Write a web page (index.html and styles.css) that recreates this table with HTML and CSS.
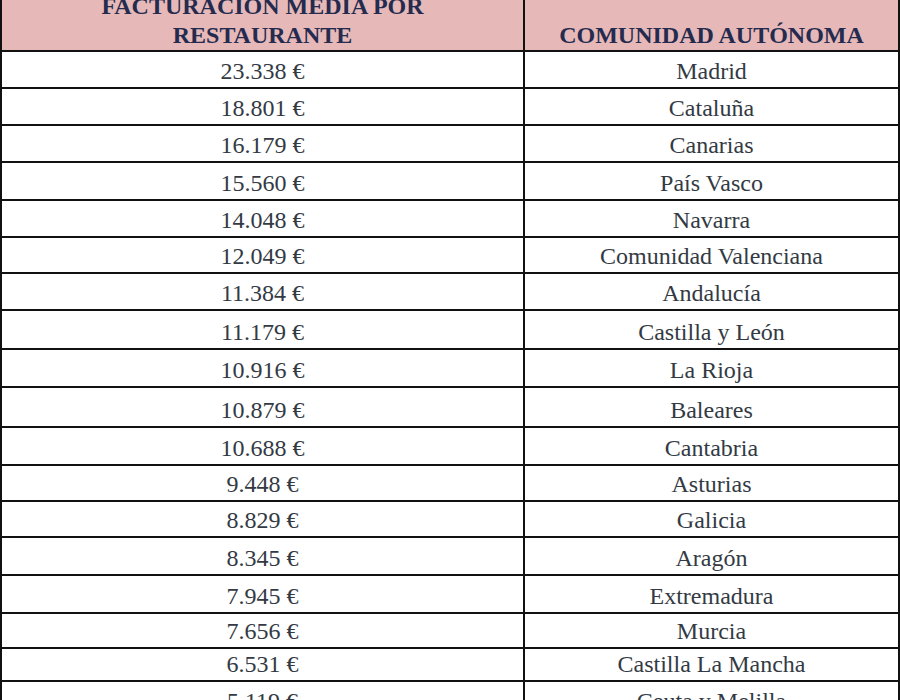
FILE: index.html
```html
<!DOCTYPE html>
<html lang="es">
<head>
<meta charset="utf-8">
<title>Facturación media por restaurante</title>
<link rel="stylesheet" href="styles.css">
</head>
<body>
<table class="data">
  <thead>
    <tr>
      <th class="c1">FACTURACIÓN MEDIA POR<br>RESTAURANTE</th>
      <th class="c2">COMUNIDAD AUTÓNOMA</th>
    </tr>
  </thead>
  <tbody>
    <tr class="r37"><td>23.338 €</td><td>Madrid</td></tr>
    <tr class="r37"><td>18.801 €</td><td>Cataluña</td></tr>
    <tr class="r37"><td>16.179 €</td><td>Canarias</td></tr>
    <tr class="r38"><td>15.560 €</td><td>País Vasco</td></tr>
    <tr class="r37"><td>14.048 €</td><td>Navarra</td></tr>
    <tr class="r36"><td>12.049 €</td><td>Comunidad Valenciana</td></tr>
    <tr class="r37"><td>11.384 €</td><td>Andalucía</td></tr>
    <tr class="r39"><td>11.179 €</td><td>Castilla y León</td></tr>
    <tr class="r38"><td>10.916 €</td><td>La Rioja</td></tr>
    <tr class="r40"><td>10.879 €</td><td>Baleares</td></tr>
    <tr class="r38"><td>10.688 €</td><td>Cantabria</td></tr>
    <tr class="r36"><td>9.448 €</td><td>Asturias</td></tr>
    <tr class="r36"><td>8.829 €</td><td>Galicia</td></tr>
    <tr class="r38"><td>8.345 €</td><td>Aragón</td></tr>
    <tr class="r38"><td>7.945 €</td><td>Extremadura</td></tr>
    <tr class="r35"><td>7.656 €</td><td>Murcia</td></tr>
    <tr class="r33"><td>6.531 €</td><td>Castilla La Mancha</td></tr>
    <tr class="r37"><td>5.119 €</td><td>Ceuta y Melilla</td></tr>
  </tbody>
</table>
</body>
</html>
```
FILE: styles.css
```css
html, body {
  margin: 0;
  padding: 0;
  background: #ffffff;
}

.data {
  width: 900px;
  margin-top: -10px;
  border-collapse: separate;
  border-spacing: 0;
  border-left: 2px solid #111111;
  border-top: 2px solid #111111;
  font-family: "Liberation Serif", "Times New Roman", serif;
  font-size: 24px;
  table-layout: fixed;
}

.data th,
.data td {
  box-sizing: border-box;
  border-right: 2px solid #111111;
  border-bottom: 2px solid #111111;
  text-align: center;
  vertical-align: bottom;
  padding: 0;
}

.data th {
  height: 60px;
  background: #e6b9b8;
  color: #252b4f;
  font-weight: bold;
  line-height: 29px;
}

.data th.c1 {
  width: 523px;
}

.data td {
  color: #333a44;
  line-height: 24px;
  padding-bottom: 4px;
}

.r33 td { height: 33px; }
.r35 td { height: 35px; }
.r36 td { height: 36px; }
.r37 td { height: 37px; }
.r38 td { height: 38px; }
.r39 td { height: 39px; }
.r40 td { height: 40px; }
```
